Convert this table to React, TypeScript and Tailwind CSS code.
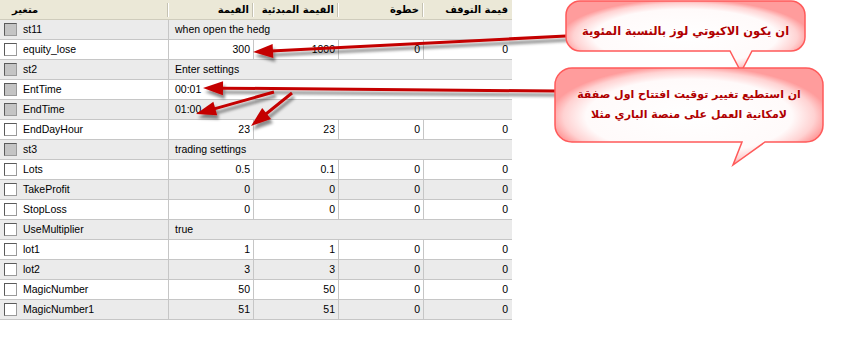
import React from 'react'

type Row = {
  name: string
  disabled?: boolean
  text?: string
  vals?: string[]
}

const rows: Row[] = [
  { name: 'st11', disabled: true, text: 'when open the hedg' },
  { name: 'equity_lose', vals: ['300', '1000', '0', '0'] },
  { name: 'st2', disabled: true, text: 'Enter settings' },
  { name: 'EntTime', disabled: true, text: '00:01' },
  { name: 'EndTime', disabled: true, text: '01:00' },
  { name: 'EndDayHour', vals: ['23', '23', '0', '0'] },
  { name: 'st3', disabled: true, text: 'trading settings' },
  { name: 'Lots', vals: ['0.5', '0.1', '0', '0'] },
  { name: 'TakeProfit', vals: ['0', '0', '0', '0'] },
  { name: 'StopLoss', vals: ['0', '0', '0', '0'] },
  { name: 'UseMultiplier', text: 'true' },
  { name: 'lot1', vals: ['1', '1', '0', '0'] },
  { name: 'lot2', vals: ['3', '3', '0', '0'] },
  { name: 'MagicNumber', vals: ['50', '50', '0', '0'] },
  { name: 'MagicNumber1', vals: ['51', '51', '0', '0'] }
]

const headers = ['القيمة', 'القيمة المبدئية', 'خطوة', 'قيمة التوقف']

// arrows: [fromX, fromY, tipX, tipY]
const arrows: number[][] = [
  [566, 36, 253, 52],
  [556, 91, 203, 88],
  [274, 92, 196, 114],
  [292, 93, 251, 126]
]

const arrowParts = ([x1, y1, x2, y2]: number[]) => {
  const a = Math.atan2(y2 - y1, x2 - x1)
  const len = 20
  const w = 7
  const bx = x2 - len * Math.cos(a)
  const by = y2 - len * Math.sin(a)
  const px = -Math.sin(a) * w
  const py = Math.cos(a) * w
  return {
    line: { x1, y1, x2: bx + 2 * Math.cos(a), y2: by + 2 * Math.sin(a) },
    head: `${x2},${y2} ${bx + px},${by + py} ${bx - px},${by - py}`
  }
}

const Checkbox = ({ disabled }: { disabled?: boolean }) => (
  <div
    className={
      disabled
        ? 'h-[13px] w-[13px] shrink-0 border border-t-[#5a5a5a] border-l-[#5a5a5a] border-b-[#9a9a9a] border-r-[#9a9a9a] bg-[#c4c4c4]'
        : 'h-[13px] w-[13px] shrink-0 border border-t-[#5a5a5a] border-l-[#5a5a5a] border-b-[#9a9a9a] border-r-[#9a9a9a] bg-white'
    }
  />
)

const Separator = () => (
  <div className="h-[14px] w-[2px] shrink-0 border-l border-l-[#c5c2b2] border-r border-r-white" />
)

const Callouts = () => (
  <svg className="pointer-events-none absolute left-0 top-0" width={ 842 } height={ 338 }>
    <defs>
      <filter id="shadow" x="-10%" y="-50%" width="120%" height="200%">
        <feDropShadow dx="2" dy="4" stdDeviation="1.6" floodColor="#000" floodOpacity="0.45" />
      </filter>
      <radialGradient id="pink" cx="50%" cy="50%" r="52%">
        <stop offset="0" stopColor="#ffffff" />
        <stop offset="0.74" stopColor="#fffafa" />
        <stop offset="0.9" stopColor="#ffd2d2" />
        <stop offset="1" stopColor="#ff9c9c" />
      </radialGradient>
    </defs>

    { arrows.map((arrow, i) => {
      const { line, head } = arrowParts(arrow)
      return (
        <g key={ i } filter="url(#shadow)">
          <line { ...line } stroke="#c40000" strokeWidth={ 3 } />
          <polygon points={ head } fill="#c40000" />
        </g>
      )
    }) }

    <path
      d="M 580 1 H 791 A 14 14 0 0 1 805 15 V 37 A 14 14 0 0 1 791 51 H 752 L 741 72 L 730 51 H 580 A 14 14 0 0 1 566 37 V 15 A 14 14 0 0 1 580 1 Z"
      fill="url(#pink)"
      stroke="#ff5a5a"
      strokeWidth={ 1.5 }
    />
    <path
      d="M 572 68 H 806 A 17 17 0 0 1 823 85 V 125 A 17 17 0 0 1 806 142 H 765 L 733 165 L 742 142 H 572 A 17 17 0 0 1 555 125 V 85 A 17 17 0 0 1 572 68 Z"
      fill="url(#pink)"
      stroke="#ff5a5a"
      strokeWidth={ 1.5 }
    />
  </svg>
)

export default function App() {
  return (
    <div className="relative h-[338px] w-[842px] overflow-hidden bg-white font-['Liberation_Sans','DejaVu_Sans',sans-serif] text-[10.5px] text-black">
      <div className="w-[512px]">
        <div className="grid h-[20px] grid-cols-[169px_85px_85px_85px_88px] border-b border-[#cfccbc] bg-[#ebe8d7] font-['DejaVu_Sans',sans-serif] text-[10px] font-bold">
          <div className="flex items-center justify-between pl-[12px]">
            <span dir="rtl">متغير</span>
            <Separator />
          </div>
          { headers.map((h, i) => (
            <div key={ i } className="flex items-center justify-end gap-[3px] overflow-hidden">
              <span dir="rtl" className="whitespace-nowrap">{ h }</span>
              { i < 3 ? <Separator /> : <div className="w-[1px]" /> }
            </div>
          )) }
        </div>

        { rows.map((row, i) => (
          <div
            key={ row.name }
            className={
              i % 2 === 0
                ? 'grid h-[20px] grid-cols-[169px_85px_85px_85px_88px] border-b border-[#c6c6c6] bg-[#ebebeb]'
                : 'grid h-[20px] grid-cols-[169px_85px_85px_85px_88px] border-b border-[#c6c6c6] bg-white'
            }
          >
            <div className="flex items-center gap-[6px] border-r border-[#c6c6c6] pl-[4px]">
              <Checkbox disabled={ row.disabled } />
              <span>{ row.name }</span>
            </div>
            { row.text ? (
              <div className="col-span-4 flex items-center pl-[6px]">{ row.text }</div>
            ) : (
              row.vals?.map((v, j) => (
                <div
                  key={ j }
                  className={
                    j < 3
                      ? 'flex items-center justify-end border-r border-[#c6c6c6] pr-[3px]'
                      : 'flex items-center justify-end pr-[4px]'
                  }
                >
                  { v }
                </div>
              ))
            ) }
          </div>
        )) }
      </div>

      <Callouts />

      <div
        dir="rtl"
        className="absolute left-[566px] top-[1px] flex h-[50px] w-[239px] items-center justify-center pt-[11px] font-['DejaVu_Sans',sans-serif] text-[11.5px] font-bold text-[#b00000] [text-shadow:0_0_2px_#ffffff]"
      >
        ان يكون الاكيوتي لوز بالنسبة المئوية
      </div>
      <div
        dir="rtl"
        className="absolute left-[555px] top-[68px] flex h-[74px] w-[268px] flex-col items-center justify-center font-['DejaVu_Sans',sans-serif] text-[11px] font-bold leading-[20px] text-[#b00000] [text-shadow:0_0_2px_#ffffff]"
      >
        <span>ان استطيع تغيير توقيت افتتاح اول صفقة</span>
        <span>لامكانية العمل على منصة الباري مثلا</span>
      </div>
    </div>
  )
}
